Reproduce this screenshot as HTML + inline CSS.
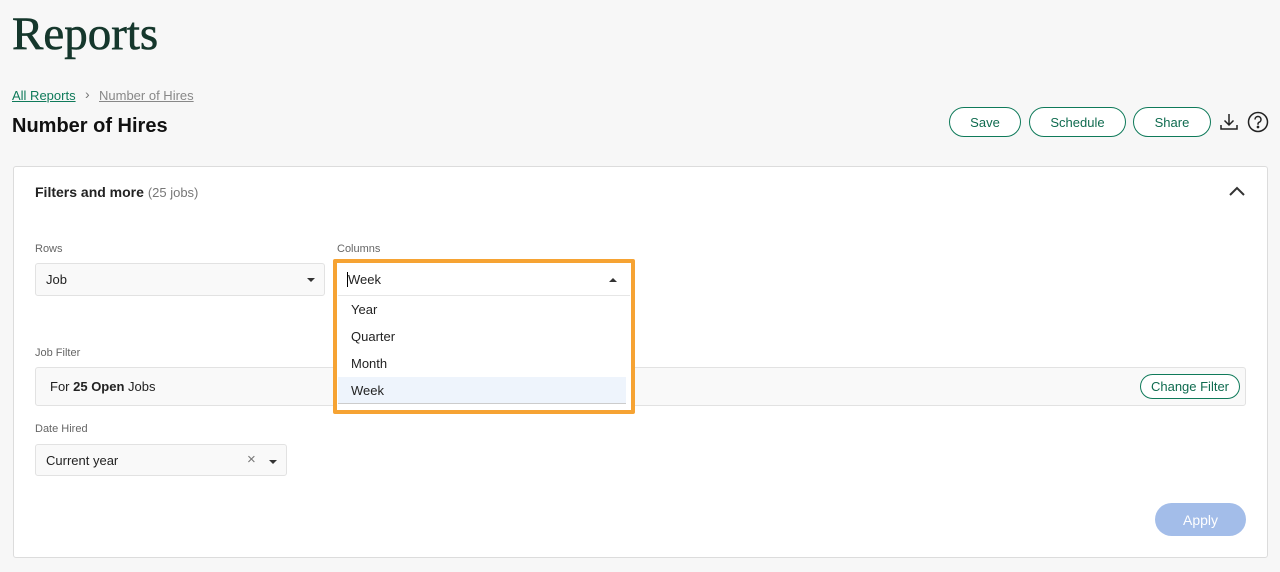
<!DOCTYPE html>
<html><head><style>
body{margin:0;width:1280px;height:572px;background:#f7f7f7;font-family:"Liberation Sans",sans-serif;position:relative;overflow:hidden;color:#222}
.a{position:absolute}
h1{position:absolute;left:12px;top:7px;margin:0;font-family:"Liberation Serif",serif;font-weight:400;font-size:47px;color:#15372c;-webkit-text-stroke:0.6px #15372c}
.btn{position:absolute;top:107px;height:30px;border:1.5px solid #0f7a5a;border-radius:16px;box-sizing:border-box;color:#0f6b4f;font-size:13px;display:flex;align-items:center;justify-content:center;background:#fff}
.lbl{position:absolute;font-size:11px;color:#666}
.sel{position:absolute;box-sizing:border-box;border:1px solid #e2e2e2;border-radius:3px;background:#f9f9f9;font-size:13px;display:flex;align-items:center;padding-left:10px}
.caret{position:absolute;width:0;height:0;border-left:4px solid transparent;border-right:4px solid transparent}
.opt{position:absolute;left:5px;width:288px;height:27px;font-size:13px;display:flex;align-items:center;padding-left:13px;box-sizing:border-box}
</style></head><body>
<h1>Reports</h1>
<div class="a" style="left:12px;top:88px;font-size:13px;color:#0f7a5a;text-decoration:underline">All Reports</div>
<div class="a" style="left:85px;top:86px;font-size:14px;color:#777">›</div>
<div class="a" style="left:99px;top:88px;font-size:13px;color:#888;text-decoration:underline">Number of Hires</div>
<div class="a" style="left:12px;top:115px;font-size:20px;font-weight:700;color:#111">Number of Hires</div>
<div class="btn" style="left:949px;width:72px">Save</div>
<div class="btn" style="left:1029px;width:97px">Schedule</div>
<div class="btn" style="left:1133px;width:78px">Share</div>
<svg class="a" style="left:1219px;top:112px" width="20" height="20" viewBox="0 0 20 20" fill="none" stroke="#222" stroke-width="1.5"><path d="M10 2v11M5.5 8.5L10 13l4.5-4.5M2 13v4h16v-4"/></svg>
<svg class="a" style="left:1247px;top:111px" width="22" height="22" viewBox="0 0 22 22" fill="none" stroke="#222" stroke-width="1.5"><circle cx="11" cy="11" r="9.5"/><path d="M8 8.5a3 3 0 1 1 4 2.8c-.8.4-1 .9-1 1.7v.8"/><circle cx="11" cy="16" r=".6" fill="#222"/></svg>
<div class="a" style="left:13px;top:166px;width:1255px;height:392px;background:#fff;border:1px solid #dcdcdc;border-radius:3px;box-sizing:border-box"></div>
<div class="a" style="left:35px;top:184px;font-size:14px;font-weight:700;color:#222">Filters and more <span style="font-weight:400;font-size:13px;color:#777">(25 jobs)</span></div>
<svg class="a" style="left:1228px;top:185px" width="18" height="12" viewBox="0 0 18 12" fill="none" stroke="#333" stroke-width="2"><path d="M2 10l7-7 7 7"/></svg>
<div class="lbl" style="left:35px;top:243px">Rows</div>
<div class="sel" style="left:35px;top:263px;width:290px;height:33px">Job</div>
<div class="caret" style="left:307px;top:278px;border-top:4px solid #333"></div>
<div class="lbl" style="left:337px;top:243px">Columns</div>
<div class="lbl" style="left:35px;top:347px">Job Filter</div>
<div class="sel" style="left:35px;top:367px;width:1211px;height:39px;padding-left:14px">For&nbsp;<b>25 Open</b>&nbsp;Jobs</div>
<div class="a" style="left:1140px;top:374px;width:100px;height:25px;border:1px solid #0f7a5a;border-radius:13px;box-sizing:border-box;background:#fff;color:#0f6b4f;font-size:13px;display:flex;align-items:center;justify-content:center">Change Filter</div>
<div class="lbl" style="left:35px;top:423px">Date Hired</div>
<div class="sel" style="left:35px;top:444px;width:252px;height:32px">Current year</div>
<div class="a" style="left:247px;top:451px;font-size:15px;color:#777">×</div>
<div class="caret" style="left:269px;top:460px;border-top:4px solid #333"></div>
<div class="a" style="left:1155px;top:503px;width:91px;height:33px;border-radius:17px;background:#a3bde9;color:#fff;font-size:14px;display:flex;align-items:center;justify-content:center">Apply</div>
<div class="a" style="left:333px;top:259px;width:302px;height:155px;border:4px solid #f6a333;border-radius:2px;box-sizing:border-box;background:#fff">
 <div class="a" style="left:1px;top:1px;width:292px;height:32px;border-bottom:1px solid #e6e6e6;font-size:13px;display:flex;align-items:center;padding-left:9px;box-sizing:border-box"><span style="border-left:1px solid #000;height:15px;margin-right:0"></span>Week</div>
 <div class="caret" style="left:272px;top:15px;border-bottom:4px solid #333"></div>
 <div class="opt" style="left:1px;top:33px">Year</div>
 <div class="opt" style="left:1px;top:60px">Quarter</div>
 <div class="opt" style="left:1px;top:87px">Month</div>
 <div class="opt" style="left:1px;top:114px;background:#eef4fc;height:27px;border-bottom:1px solid #ccc">Week</div>
</div>
</body></html>
